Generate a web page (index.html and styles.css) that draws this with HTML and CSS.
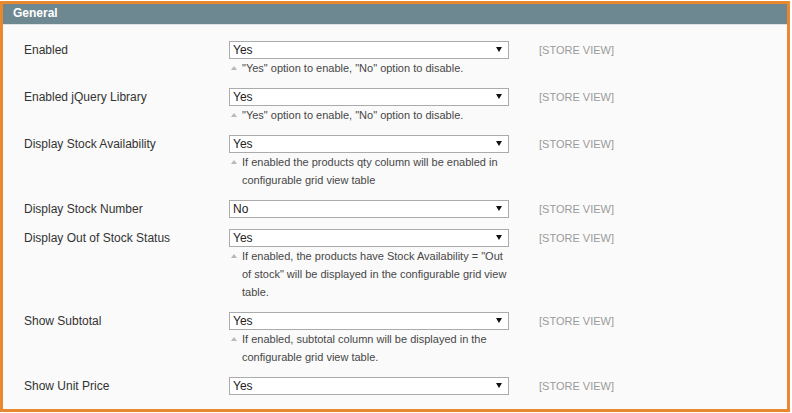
FILE: index.html
```html
<!DOCTYPE html>
<html>
<head>
<meta charset="utf-8">
<link rel="stylesheet" href="styles.css">
</head>
<body>
<div class="panel">
  <div class="panel-head">General</div>
  <div class="panel-body">
    <div class="row">
      <label class="label">Enabled</label>
      <div class="field">
        <span class="select-wrap"><select class="select"><option>Yes</option><option>No</option></select></span>
        <p class="note">"Yes" option to enable, "No" option to disable.</p>
      </div>
      <span class="scope">[STORE VIEW]</span>
    </div>
    <div class="row">
      <label class="label">Enabled jQuery Library</label>
      <div class="field">
        <span class="select-wrap"><select class="select"><option>Yes</option><option>No</option></select></span>
        <p class="note">"Yes" option to enable, "No" option to disable.</p>
      </div>
      <span class="scope">[STORE VIEW]</span>
    </div>
    <div class="row">
      <label class="label">Display Stock Availability</label>
      <div class="field">
        <span class="select-wrap"><select class="select"><option>Yes</option><option>No</option></select></span>
        <p class="note">If enabled the products qty column will be enabled in configurable grid view table</p>
      </div>
      <span class="scope">[STORE VIEW]</span>
    </div>
    <div class="row">
      <label class="label">Display Stock Number</label>
      <div class="field">
        <span class="select-wrap"><select class="select"><option>No</option><option>Yes</option></select></span>
      </div>
      <span class="scope">[STORE VIEW]</span>
    </div>
    <div class="row">
      <label class="label">Display Out of Stock Status</label>
      <div class="field">
        <span class="select-wrap"><select class="select"><option>Yes</option><option>No</option></select></span>
        <p class="note">If enabled, the products have Stock Availability = "Out<br>of stock" will be displayed in the configurable grid view table.</p>
      </div>
      <span class="scope">[STORE VIEW]</span>
    </div>
    <div class="row">
      <label class="label">Show Subtotal</label>
      <div class="field">
        <span class="select-wrap"><select class="select"><option>Yes</option><option>No</option></select></span>
        <p class="note">If enabled, subtotal column will be displayed in the configurable grid view table.</p>
      </div>
      <span class="scope">[STORE VIEW]</span>
    </div>
    <div class="row">
      <label class="label">Show Unit Price</label>
      <div class="field">
        <span class="select-wrap"><select class="select"><option>Yes</option><option>No</option></select></span>
      </div>
      <span class="scope">[STORE VIEW]</span>
    </div>
  </div>
</div>
</body>
</html>
```
FILE: styles.css
```css
html, body {
  margin: 0;
  padding: 0;
  background: #ffffff;
  font-family: "Liberation Sans", Arial, sans-serif;
}

.panel {
  box-sizing: border-box;
  margin-top: 1px;
  width: 790px;
  height: 411px;
  border: 3px solid #e8892f;
  background: #fafafa;
  overflow: hidden;
}

.panel-head {
  height: 20px;
  line-height: 18px;
  padding-left: 10px;
  background: #6e8891;
  border-bottom: 1px solid #dde3e6;
  color: #ffffff;
  font-size: 12px;
  font-weight: bold;
}

.panel-body {
  padding: 16px 0 0 21px;
}

.row {
  display: grid;
  grid-template-columns: 205px 280px 1fr;
  padding-bottom: 11px;
}

.label {
  font-size: 12px;
  line-height: 18px;
  color: #333333;
}

.field {
  min-width: 0;
}

.select-wrap {
  position: relative;
  display: block;
  width: 280px;
  height: 18px;
}

.select-wrap::after {
  content: "";
  position: absolute;
  right: 7px;
  top: 6px;
  border-left: 3px solid transparent;
  border-right: 3px solid transparent;
  border-top: 5px solid #111111;
  pointer-events: none;
}

.select {
  -webkit-appearance: none;
  appearance: none;
  box-sizing: border-box;
  display: block;
  width: 280px;
  height: 18px;
  margin: 0;
  padding: 0 3px;
  border: 1px solid #ababab;
  border-radius: 0;
  background: #ffffff;
  font-family: "Liberation Sans", Arial, sans-serif;
  font-size: 12px;
  line-height: 16px;
  color: #222222;
}

.note {
  position: relative;
  width: 280px;
  margin: 0;
  padding-left: 13px;
  font-size: 11px;
  line-height: 18px;
  color: #474747;
}

.note::before {
  content: "";
  position: absolute;
  left: 2px;
  top: 7px;
  border-left: 3px solid transparent;
  border-right: 3px solid transparent;
  border-bottom: 4px solid #b8b8b8;
}

.scope {
  padding-left: 30px;
  font-size: 11px;
  line-height: 18px;
  color: #9a9a9a;
}
```
